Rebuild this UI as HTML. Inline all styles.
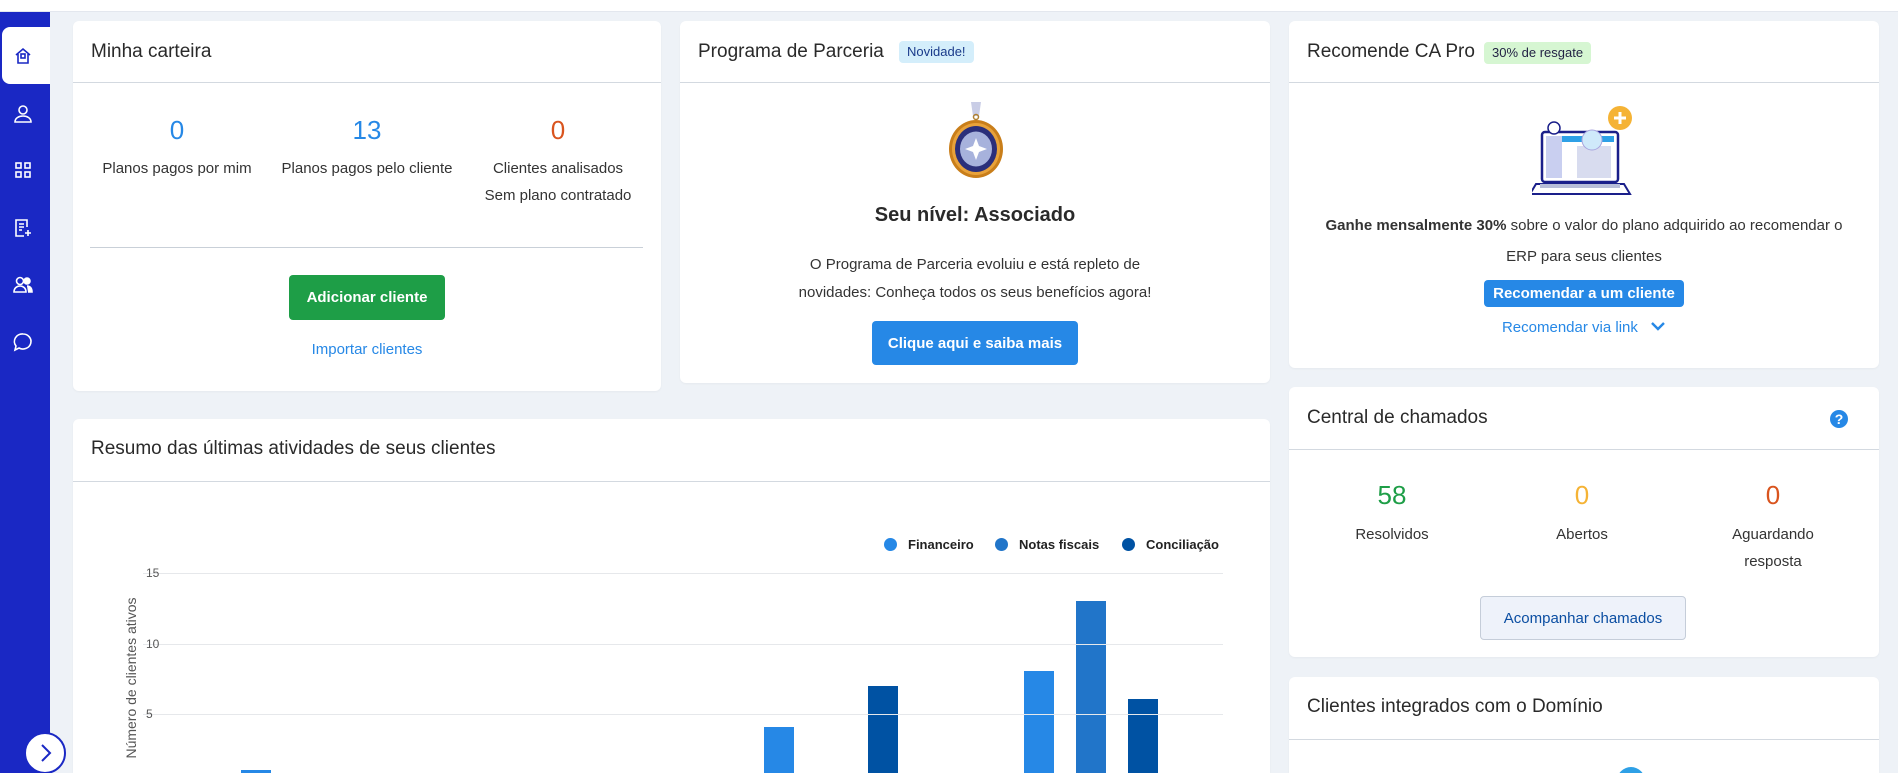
<!DOCTYPE html>
<html style="width:1898px;height:773px;overflow:hidden"><head><meta charset="utf-8"><style>
*{box-sizing:border-box;margin:0;padding:0}
body{width:1898px;height:773px;overflow:hidden;background:#eef2f7;font-family:"Liberation Sans",sans-serif;color:#333;position:relative}
.top{position:absolute;left:0;top:0;width:1898px;height:12px;background:#fff;border-bottom:1px solid #e3e7ee}
.side{position:absolute;left:0;top:12px;width:50px;height:761px;background:#1a28c4}
.act{position:absolute;left:2px;top:15px;width:48px;height:57px;background:#fff;border-radius:8px 0 0 8px}
.ic{position:absolute;left:13px;width:20px;height:20px}
.card{position:absolute;background:#fff;border-radius:6px;box-shadow:0 1px 2px rgba(0,0,0,.04);overflow:hidden}
.hd{position:absolute;left:0;right:0;top:0;border-bottom:1px solid #d3d9e0}
.t{position:absolute;left:18px;font-size:19px;color:#2a2a2a;white-space:nowrap}
.badge{position:absolute;font-size:13px;border-radius:4px;padding:0 8px;line-height:22px}
.c{position:absolute;text-align:center;white-space:nowrap;transform:translateX(-50%)}
.num{font-size:26px}
.lbl{font-size:15px;line-height:27px;color:#333}
.btn{position:absolute;color:#fff;font-weight:bold;font-size:15px;border-radius:4px;display:flex;align-items:center;justify-content:center}
.leg{position:absolute;top:537px;font-size:13px;font-weight:bold;color:#222;display:flex;align-items:center}
.leg i{display:inline-block;width:13px;height:13px;border-radius:50%;margin-right:11px}
.gl{position:absolute;left:143px;width:1080px;height:1px;background:#e6e8eb}
.tk{position:absolute;left:146px;font-size:12px;color:#555}
.bar{position:absolute;width:30px;height:200px}
</style></head><body>
<div class="top"></div>
<div class="side">
<div class="act"></div>
<svg class="ic" style="top:34px" viewBox="0 0 20 20" fill="none" stroke="#1a28c4" stroke-width="1.6"><path d="M3 9L10 3l7 6M5 8v9h10V8"/><rect x="8" y="8" width="4" height="4"/></svg>
<svg class="ic" style="top:92px" viewBox="0 0 20 20" fill="none" stroke="#fff" stroke-width="1.6"><circle cx="10" cy="6" r="4"/><path d="M2 18c0-4 4-6 8-6s8 2 8 6z"/></svg>
<svg class="ic" style="top:148px" viewBox="0 0 20 20" fill="none" stroke="#fff" stroke-width="1.6"><rect x="3" y="3" width="5" height="5"/><rect x="12" y="3" width="5" height="5"/><rect x="3" y="12" width="5" height="5"/><rect x="12" y="12" width="5" height="5"/></svg>
<svg class="ic" style="top:206px" viewBox="0 0 20 20" fill="none" stroke="#fff" stroke-width="1.6"><path d="M14 9V2H3v16h8"/><path d="M6 6h5M6 9h5M6 12h3M15 12v6M12 15h6"/></svg>
<svg class="ic" style="top:263px" viewBox="0 0 20 20" fill="none" stroke="#fff" stroke-width="1.6"><circle cx="7" cy="6" r="3.5"/><path d="M1 17c0-4 3-6 6-6s6 2 6 6z"/><circle cx="14" cy="6" r="3" fill="#fff"/><path d="M14 11c3 0 5 2 5 6h-4" fill="#fff"/></svg>
<svg class="ic" style="top:320px" viewBox="0 0 20 20" fill="none" stroke="#fff" stroke-width="1.6"><path d="M10 2a8 7.5 0 1 1-4 14l-4 2 1-4A8 7.5 0 0 1 10 2z"/></svg>
</div>
<svg style="position:absolute;left:23px;top:731px" width="44" height="42" viewBox="0 0 44 42"><circle cx="22" cy="22" r="20" fill="#fff" stroke="#1a28c4" stroke-width="2"/><path d="M19 14l8 8-8 8" fill="none" stroke="#1a28c4" stroke-width="2"/></svg>

<div class="card" style="left:73px;top:21px;width:588px;height:370px">
<div class="hd" style="height:62px"></div>
<div class="t" style="top:20px">Minha carteira</div>
<div class="c num" style="left:104px;top:94px;color:#2688e6">0</div>
<div class="c num" style="left:294px;top:94px;color:#2688e6">13</div>
<div class="c num" style="left:485px;top:94px;color:#d9541e">0</div>
<div class="c lbl" style="left:104px;top:134px">Planos pagos por mim</div>
<div class="c lbl" style="left:294px;top:134px">Planos pagos pelo cliente</div>
<div class="c lbl" style="left:485px;top:134px">Clientes analisados<br>Sem plano contratado</div>
<div style="position:absolute;left:17px;right:18px;top:226px;height:1px;background:#c9d0d8"></div>
<div class="btn" style="left:216px;top:254px;width:156px;height:45px;background:#1e9e47">Adicionar cliente</div>
<div class="c" style="left:294px;top:320px;font-size:15px;color:#2688e6">Importar clientes</div>
</div>

<div class="card" style="left:680px;top:21px;width:590px;height:362px">
<div class="hd" style="height:62px"></div>
<div class="t" style="top:20px">Programa de Parceria</div>
<div class="badge" style="left:219px;top:20px;background:#d4eefb;color:#1a3a8a">Novidade!</div>
<svg style="position:absolute;left:266px;top:81px" width="60" height="76" viewBox="0 0 60 76"><path d="M25 0h10l-2 14h-6z" fill="#c9cde6"/><circle cx="30" cy="15" r="2.5" fill="none" stroke="#b08030" stroke-width="1.5"/><ellipse cx="30" cy="47" rx="27" ry="29" fill="#c97e1a"/><ellipse cx="30" cy="47" rx="24" ry="26" fill="#e8a23a"/><ellipse cx="30" cy="47" rx="21" ry="23" fill="#2b2f7a"/><ellipse cx="30" cy="47" rx="16" ry="17.5" fill="#a7b2dc"/><path d="M30 36l3 8 8 3-8 3-3 8-3-8-8-3 8-3z" fill="#fff"/></svg>
<div class="c" style="left:295px;top:183px;font-size:20px;font-weight:bold;color:#2a2a2a">Seu nível: Associado</div>
<div class="c" style="left:295px;top:230px;font-size:15px;line-height:28px">O Programa de Parceria evoluiu e está repleto de<br>novidades: Conheça todos os seus benefícios agora!</div>
<div class="btn" style="left:192px;top:300px;width:206px;height:44px;background:#2688e6">Clique aqui e saiba mais</div>
</div>

<div class="card" style="left:1289px;top:21px;width:590px;height:347px">
<div class="hd" style="height:62px"></div>
<div class="t" style="top:20px">Recomende CA Pro</div>
<div class="badge" style="left:195px;top:21px;background:#d6f6d2;color:#224">30% de resgate</div>
<svg style="position:absolute;left:243px;top:83px" width="104" height="94" viewBox="0 0 104 94"><rect x="10" y="28" width="76" height="50" rx="3" fill="#fff" stroke="#1a1f8a" stroke-width="2.5"/><rect x="14" y="32" width="68" height="6" fill="#2ea0e6"/><rect x="45" y="42" width="34" height="32" fill="#d8dcef"/><path d="M14 32h16v42H14z" fill="#c9cff0"/><circle cx="22" cy="24" r="6" fill="#fff" stroke="#1a1f8a" stroke-width="1.5"/><path d="M4 80h88l6 10H-2z" fill="#fff" stroke="#1a1f8a" stroke-width="2"/><rect x="8" y="80" width="80" height="4" fill="#b8bed8"/><circle cx="60" cy="36" r="10" fill="#cfe9fa" stroke="#a8a4de"/><circle cx="88" cy="14" r="12" fill="#f5b335"/><path d="M88 8v12M82 14h12" stroke="#fff" stroke-width="3"/></svg>
<div class="c" style="left:295px;top:189px;font-size:15px;line-height:31px"><b>Ganhe mensalmente 30%</b> sobre o valor do plano adquirido ao recomendar o<br>ERP para seus clientes</div>
<div class="btn" style="left:195px;top:259px;width:200px;height:27px;background:#2688e6">Recomendar a um cliente</div>
<div class="c" style="left:295px;top:298px;font-size:15px;color:#2688e6">Recomendar via link <svg width="16" height="12" viewBox="0 0 16 12" style="margin-left:8px"><path d="M2 3l6 6 6-6" fill="none" stroke="#2688e6" stroke-width="2.4"/></svg></div>
</div>

<div class="card" style="left:1289px;top:387px;width:590px;height:270px">
<div class="hd" style="height:63px"></div>
<div class="t" style="top:20px">Central de chamados</div>
<svg style="position:absolute;left:540px;top:22px" width="20" height="20" viewBox="0 0 20 20"><circle cx="10" cy="10" r="9" fill="#2688e6"/><text x="10" y="15" text-anchor="middle" font-size="14" font-weight="bold" fill="#fff" font-family="Liberation Sans">?</text></svg>
<div class="c num" style="left:103px;top:93px;color:#1e9e47">58</div>
<div class="c num" style="left:293px;top:93px;color:#f5b335">0</div>
<div class="c num" style="left:484px;top:93px;color:#d9541e">0</div>
<div class="c lbl" style="left:103px;top:134px">Resolvidos</div>
<div class="c lbl" style="left:293px;top:134px">Abertos</div>
<div class="c lbl" style="left:484px;top:134px">Aguardando<br>resposta</div>
<div class="btn" style="left:191px;top:209px;width:206px;height:44px;background:#eef2fa;border:1px solid #c5cdd9;color:#0b4ea2;font-weight:normal">Acompanhar chamados</div>
</div>

<div class="card" style="left:1289px;top:677px;width:590px;height:96px;border-radius:6px 6px 0 0">
<div class="hd" style="height:63px"></div>
<div class="t" style="top:19px">Clientes integrados com o Domínio</div>
<div style="position:absolute;left:328px;top:90px;width:28px;height:28px;border-radius:50%;background:#2ea0e6"></div>
</div>

<div class="card" style="left:73px;top:419px;width:1197px;height:354px;border-radius:6px 6px 0 0">
<div class="hd" style="height:63px"></div>
<div class="t" style="top:19px">Resumo das últimas atividades de seus clientes</div>
<div class="bar" style="left:168px;top:351px;background:#2688e6"></div>
<div class="bar" style="left:691px;top:308px;background:#2688e6"></div>
<div class="bar" style="left:795px;top:267px;background:#0052a3"></div>
<div class="bar" style="left:951px;top:252px;background:#2688e6"></div>
<div class="bar" style="left:1003px;top:182px;background:#2175c9"></div>
<div class="bar" style="left:1055px;top:280px;background:#0052a3"></div>
</div>
<div class="leg" style="left:884px"><i style="background:#2688e6"></i>Financeiro</div>
<div class="leg" style="left:995px"><i style="background:#2175c9"></i>Notas fiscais</div>
<div class="leg" style="left:1122px"><i style="background:#0052a3"></i>Conciliação</div>
<div class="gl" style="top:573px"></div><div class="gl" style="top:644px"></div><div class="gl" style="top:714px"></div>
<div class="tk" style="top:566px">15</div><div class="tk" style="top:637px">10</div><div class="tk" style="top:707px">5</div>
<div style="position:absolute;left:131px;top:678px;transform:translate(-50%,-50%) rotate(-90deg);font-size:14px;color:#555;white-space:nowrap">Número de clientes ativos</div>
</body></html>
